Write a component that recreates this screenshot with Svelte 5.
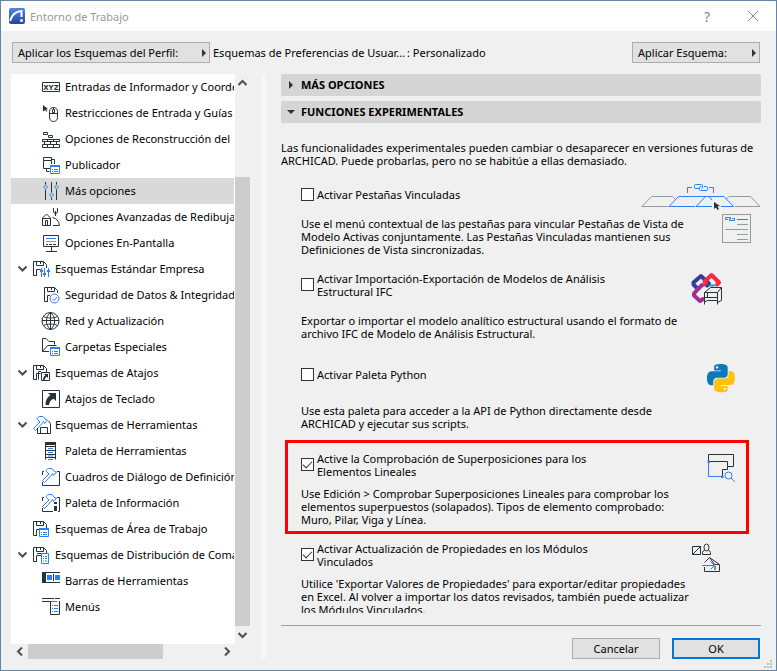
<script lang="ts">
	type Shape = { d: string; c: string };
	type Row = { label: string; icon: string; level: number; open?: boolean };

	// c: k = dark line, b = blue line, kf / bf = filled, w = white fill with blue line
	const floppy = 'M5 16.5H1.5V2.5H11.5L14.5 5.5V9M4.5 2.5V6.5H11.5V2.5M8.5 3V5M4.5 16.5V10.5H8.5';
	const ventana: Shape[] = [
		{ d: 'M9.5 10.5H18.5V18.5H9.5Z', c: 'w' },
		{ d: 'M9 10H19V12H9Z', c: 'bf' },
		{ d: 'M11 14.5H12M13 14.5H17M11 16.5H12M13 16.5H17', c: 'b' }
	];
	const martillo: Shape = {
		d: 'M1.5 13.5L8 7L5.5 4.5C4.5 3.5 6 2 7.5 1.5H11L13.5 4.5L15.5 5L12.5 8.5L11.5 6.5L10 8.5L3.5 15.5Z',
		c: 'b'
	};

	const iconos: Record<string, Shape[]> = {
		xyz: [{ d: 'M1.5 5.5H18.5V14.5H1.5Z', c: 'k' }],
		raton: [
			{ d: 'M2 2L7 6L5 6.5L6.5 8L5.5 8.7L4.3 7L2 8.5Z', c: 'kf' },
			{ d: 'M8.5 10V8.5C8.5 5.5 10.5 4.5 12.5 4.5S16.5 5.5 16.5 8.5V14C16.5 17 15 18.5 12.5 18.5S8.5 17 8.5 14ZM8.5 10.5H16.5M12.5 4.5V6M12.5 10V11M11.5 6.5H13.5V9.5H11.5Z', c: 'k' }
		],
		muro: [
			{ d: 'M2.5 3.5H6.5V5.5H2.5ZM7.5 6.5H11.5V8.5H7.5Z', c: 'k' },
			{ d: 'M1.5 10.5H18.5M1.5 12.5H18.5M1.5 15.5H18.5M1.5 18.5H18.5M1.5 10.5V12.5M6.5 10.5V12.5M12.5 10.5V12.5M18.5 10.5V12.5M3.5 12.5V15.5M9.5 12.5V15.5M15.5 12.5V15.5M1.5 15.5V18.5M6.5 15.5V18.5M12.5 15.5V18.5M18.5 15.5V18.5', c: 'k' }
		],
		publicador: [
			{ d: 'M2.5 2.5H10.5V5.5H2.5ZM2.5 5.5V13.5H9M10.5 4.5H13.5V9M5.5 14V16.5H8.5M10.5 5.5V9', c: 'k' },
			...ventana
		],
		ajustes: [
			{ d: 'M4.5 1V3.5M4.5 8.5V19M10.5 1V11.5M10.5 16.5V19M15.5 1V3.5M15.5 8.5V19', c: 'k' },
			{ d: 'M4.5 4L6.5 6L4.5 8L2.5 6ZM10.5 12L12.5 14L10.5 16L8.5 14ZM15.5 4L17.5 6L15.5 8L13.5 6Z', c: 'b' }
		],
		redibujar: [
			{ d: 'M1.5 18.5V11L5.5 7L9.5 11V18.5ZM1.5 11.5H9.5M4.5 18.5V13.5H6.5V18.5', c: 'k' },
			{ d: 'M12.5 1V5L14.5 7.5L16.5 5V1M14.5 4V9M11.5 10.5C15.5 11.5 18 14 18.5 18.5H12', c: 'k' }
		],
		pantalla: [
			{ d: 'M2.5 2.5H17.5V13.5H2.5ZM10.5 13.5V18M5 18.5H16M5 11.5H7M8 11.5H11M12 11.5H15', c: 'k' },
			{ d: 'M5 5.5H15', c: 'b' },
			{ d: 'M5 8.5H15', c: 'g' }
		],
		empresa: [
			{ d: floppy, c: 'k' },
			{ d: 'M9.5 9V18M12.5 9V18M16.5 9V18', c: 'b' },
			{ d: 'M8 11H11V13H8ZM11 14H14V16H11ZM15 11H18V13H15Z', c: 'bf' }
		],
		seguridad: [
			{ d: 'M7 16.5H3.5V2.5H13.5L16.5 5.5V8M6.5 2.5V6.5H13.5V2.5M10.5 3V5M6.5 16.5V10.5H9', c: 'k' },
			{ d: 'M18 13.5A4.5 4.5 0 1 1 9 13.5A4.5 4.5 0 1 1 18 13.5ZM11 13.5L13 15.5L16 12', c: 'b' }
		],
		red: [
			{ d: 'M18 10A8.5 8.5 0 1 1 1 10A8.5 8.5 0 1 1 18 10ZM1 9.5H18M9.5 1.5V18.5M2.5 5.5C6 7.5 13 7.5 16.5 5.5M2.5 14.5C6 12.5 13 12.5 16.5 14.5M9.5 1.5C4 6 4 14 9.5 18.5C15 14 15 6 9.5 1.5', c: 'k' }
		],
		carpeta: [
			{ d: 'M8 14.5H1.5V1.5H5L8 4.5H13.5V7.5M1.5 14.5L6.5 8.5H15.5', c: 'k' },
			...ventana
		],
		atajos: [
			{ d: floppy, c: 'k' },
			{ d: 'M6.5 16.5V8.5H9', c: 'k' },
			{ d: 'M9.5 9.5H17.5V17.5H9.5Z', c: 'k' },
			{ d: 'M12 11H16V15L14.8 13.8C13.5 14.5 13 15.5 12.5 17H11C11 15 11.7 13.8 13.3 12.3Z', c: 'kf' }
		],
		teclado: [
			{ d: 'M1.5 1.5H18.5V18.5H1.5Z', c: 'k' },
			{ d: 'M7 4H15V12L12.6 9.8C9.5 11 8.5 13 8 16H4.5C4.5 11.5 6 8.5 9.3 6.3Z', c: 'kf' }
		],
		herramientas: [
			martillo,
			{ d: 'M5.5 13V18.5H18.5V8.5L16.5 6M8.5 18.5V12.5H15.5V18.5', c: 'k' }
		],
		paleta: [
			{ d: 'M4.5 18.5V1.5H14.5V18.5M4.5 5.5H14.5M4.5 9.5H14.5M4.5 13.5H14.5M4.5 16.5H14.5', c: 'k' },
			{ d: 'M4 1H15V4H4Z', c: 'kf' },
			{ d: 'M7 7.5H12M7 11.5H12M7 15H12M7 18.5H12', c: 'b' }
		],
		cuadros: [martillo, { d: 'M1.5 8V4.5H3M1.5 15V18.5H18.5V4.5H16', c: 'k' }],
		informacion: [
			martillo,
			{ d: 'M1.5 8V4.5H3M1.5 15V18.5H12M16 4.5H18.5V18.5H17', c: 'k' },
			{ d: 'M13 9H16V11H13ZM13 13H16V18H13Z', c: 'kf' }
		],
		area: [
			{ d: floppy, c: 'k' },
			{ d: 'M7.5 9.5H16.5V17.5H7.5Z', c: 'w' },
			{ d: 'M7 9H17V11H7Z', c: 'bf' },
			{ d: 'M9 13.5H10M11 13.5H15M9 15.5H10M11 15.5H15', c: 'b' }
		],
		distribucion: [
			{ d: floppy, c: 'k' },
			{ d: 'M5 8.5H15M6 10.5H9', c: 'k' },
			{ d: 'M9.5 8.5H16.5V18.5H9.5ZM11 11.5H12M13 11.5H15M11 13.5H12M13 13.5H15M11 16H12M13 16H15', c: 'w' }
		],
		barras: [
			{ d: 'M1 1H5V12H1Z', c: 'kf' },
			{ d: 'M5 1.5H19M5 11.5H19M12.5 3V10', c: 'k' },
			{ d: 'M6 4H11V9H6ZM14 4H19V9H14Z', c: 'bf' }
		],
		menus: [
			{ d: 'M1 1.5H13M14 1.5H19M1 4.5H9M9.5 4V17.5H18.5V4', c: 'k' },
			{ d: 'M10 4.5H16M11 8.5H12M13 8.5H17M11 11.5H12M13 11.5H17M11 14.5H12M13 14.5H17', c: 'b' }
		]
	};

	const arbol: Row[] = [
		{ label: 'Entradas de Informador y Coordenadas', icon: 'xyz', level: 2 },
		{ label: 'Restricciones de Entrada y Guías', icon: 'raton', level: 2 },
		{ label: 'Opciones de Reconstrucción del', icon: 'muro', level: 2 },
		{ label: 'Publicador', icon: 'publicador', level: 2 },
		{ label: 'Más opciones', icon: 'ajustes', level: 2 },
		{ label: 'Opciones Avanzadas de Redibujado', icon: 'redibujar', level: 2 },
		{ label: 'Opciones En-Pantalla', icon: 'pantalla', level: 2 },
		{ label: 'Esquemas Estándar Empresa', icon: 'empresa', level: 1, open: true },
		{ label: 'Seguridad de Datos & Integridad', icon: 'seguridad', level: 2 },
		{ label: 'Red y Actualización', icon: 'red', level: 2 },
		{ label: 'Carpetas Especiales', icon: 'carpeta', level: 2 },
		{ label: 'Esquemas de Atajos', icon: 'atajos', level: 1, open: true },
		{ label: 'Atajos de Teclado', icon: 'teclado', level: 2 },
		{ label: 'Esquemas de Herramientas', icon: 'herramientas', level: 1, open: true },
		{ label: 'Paleta de Herramientas', icon: 'paleta', level: 2 },
		{ label: 'Cuadros de Diálogo de Definición', icon: 'cuadros', level: 2 },
		{ label: 'Paleta de Información', icon: 'informacion', level: 2 },
		{ label: 'Esquemas de Área de Trabajo', icon: 'area', level: 1 },
		{ label: 'Esquemas de Distribución de Comandos', icon: 'distribucion', level: 1, open: true },
		{ label: 'Barras de Herramientas', icon: 'barras', level: 2 },
		{ label: 'Menús', icon: 'menus', level: 2 }
	];

	let seleccion = $state('ajustes');

	let funciones = $state([
		{
			id: 'pestanas',
			activa: false,
			titulo: 'Activar Pestañas Vinculadas',
			texto: 'Use el menú contextual de las pestañas para vincular Pestañas de Vista de\nModelo Activas conjuntamente. Las Pestañas Vinculadas mantienen sus\nDefiniciones de Vista sincronizadas.'
		},
		{
			id: 'ifc',
			activa: false,
			titulo: 'Activar Importación-Exportación de Modelos de Análisis\nEstructural IFC',
			texto: 'Exportar o importar el modelo analítico estructural usando el formato de\narchivo IFC de Modelo de Análisis Estructural.'
		},
		{
			id: 'python',
			activa: false,
			titulo: 'Activar Paleta Python',
			texto: 'Use esta paleta para acceder a la API de Python directamente desde\nARCHICAD y ejecutar sus scripts.'
		},
		{
			id: 'superposicion',
			activa: true,
			titulo: 'Active la Comprobación de Superposiciones para los\nElementos Lineales',
			texto: 'Use Edición > Comprobar Superposiciones Lineales para comprobar los\nelementos superpuestos (solapados). Tipos de elemento comprobado:\nMuro, Pilar, Viga y Línea.'
		},
		{
			id: 'modulos',
			activa: true,
			titulo: 'Activar Actualización de Propiedades en los Módulos\nVinculados',
			texto: "Utilice 'Exportar Valores de Propiedades' para exportar/editar propiedades\nen Excel. Al volver a importar los datos revisados, también puede actualizar\nlos Módulos Vinculados."
		}
	]);

	const serpiente =
		'M14.25.18l.9.2.73.26.59.3.45.32.34.34.25.34.16.33.1.3.04.26.02.2-.01.13V8.5l-.05.63-.13.55-.21.46-.26.38-.3.31-.33.25-.35.19-.35.14-.33.1-.3.07-.26.04-.21.02H8.77l-.69.05-.59.14-.5.22-.41.27-.33.32-.27.35-.2.36-.15.37-.1.35-.07.32-.04.27-.02.21v3.06H3.17l-.21-.03-.28-.07-.32-.12-.35-.18-.36-.26-.36-.36-.35-.46-.32-.59-.28-.73-.21-.88-.14-1.05-.05-1.23.06-1.22.16-1.04.24-.87.32-.71.36-.57.4-.44.42-.33.42-.24.4-.16.36-.1.32-.05.24-.01h.16l.06.01h8.16v-.83H6.18l-.01-2.75-.02-.37.05-.34.11-.31.17-.28.25-.26.31-.23.38-.2.44-.18.51-.15.58-.12.64-.1.71-.06.77-.04.84-.02 1.27.05zm-6.3 1.98l-.23.33-.08.41.08.41.23.34.33.22.41.09.41-.09.33-.22.23-.34.08-.41-.08-.41-.23-.33-.33-.22-.41-.09-.41.09z';
</script>

<div class="dialogo">
	<header class="titulo">
		<svg class="logo" width="16" height="16" viewBox="0 0 16 16">
			<defs>
				<linearGradient id="azul" x1="0" y1="0" x2="0" y2="1">
					<stop offset="0" stop-color="#4f86e0" />
					<stop offset="1" stop-color="#2347a0" />
				</linearGradient>
			</defs>
			<rect width="16" height="16" rx="2" fill="url(#azul)" />
			<path d="M1 13C2.5 7.5 6 3.5 12.5 3V9" fill="none" stroke="#fff" stroke-width="2" />
			<circle cx="12.5" cy="12.5" r="1.5" fill="#fff" />
		</svg>
		<h1>Entorno de Trabajo</h1>
		<button class="ventana-btn" aria-label="Ayuda">?</button>
		<button class="ventana-btn" aria-label="Cerrar">
			<svg width="12" height="12" viewBox="0 0 12 12"><path d="M1 1L11 11M11 1L1 11" fill="none" stroke="#888" /></svg>
		</button>
	</header>

	<div class="perfil">
		<button class="desplegable ancho">Aplicar los Esquemas del Perfil:<span class="flecha"></span></button>
		<span class="perfil-texto">Esquemas de Preferencias de Usuar...&thinsp;: Personalizado</span>
		<button class="desplegable">Aplicar Esquema:<span class="flecha"></span></button>
	</div>

	<div class="cuerpo">
		<nav class="lateral">
			<div class="lateral-fila">
				<ul class="arbol">
					{#each arbol as fila}
						<li>
							<button class="nodo nivel-{fila.level}" class:activo={seleccion === fila.icon} onclick={() => (seleccion = fila.icon)}>
								{#if fila.level === 1}
									<svg class="chevron" width="9" height="8" viewBox="0 0 9 8">
										{#if fila.open}<path d="M.5 1.5L4.5 5.5L8.5 1.5" />{/if}
									</svg>
								{/if}
								<svg class="icono" width="20" height="20" viewBox="0 0 20 20">
									{#each iconos[fila.icon] as forma}
										<path d={forma.d} class={forma.c} />
									{/each}
									{#if fila.icon === 'xyz'}
										<text x="10" y="12.5">XYZ</text>
									{/if}
								</svg>
								<span>{fila.label}</span>
							</button>
						</li>
					{/each}
				</ul>
				<div class="barra-v">
					<button aria-label="Subir"><svg width="9" height="8" viewBox="0 0 9 8"><path d="M.5 6L4.5 2L8.5 6" /></svg></button>
					<div class="pista-v"><div class="pulgar-v"></div></div>
					<button aria-label="Bajar"><svg width="9" height="8" viewBox="0 0 9 8"><path d="M.5 2L4.5 6L8.5 2" /></svg></button>
				</div>
			</div>
			<div class="barra-h">
				<button aria-label="Izquierda"><svg width="8" height="9" viewBox="0 0 8 9"><path d="M6 .5L2 4.5L6 8.5" /></svg></button>
				<div class="pista-h"><div class="pulgar-h"></div></div>
				<button aria-label="Derecha"><svg width="8" height="9" viewBox="0 0 8 9"><path d="M2 .5L6 4.5L2 8.5" /></svg></button>
			</div>
		</nav>

		<div class="divisor"></div>

		<main class="panel">
			<button class="seccion"><span class="flecha"></span>MÁS OPCIONES</button>
			<button class="seccion"><span class="flecha abajo"></span>FUNCIONES EXPERIMENTALES</button>

			<div class="contenido">
				<p class="intro">Las funcionalidades experimentales pueden cambiar o desaparecer en versiones futuras de{'\n'}ARCHICAD. Puede probarlas, pero no se habitúe a ellas demasiado.</p>

				{#each funciones as f}
					<section class="funcion" class:resaltada={f.id === 'superposicion'}>
						<label class="opcion">
							<input type="checkbox" bind:checked={f.activa} />
							<span>{f.titulo}</span>
						</label>
						<p class="descripcion">{f.texto}</p>
						<svg class="dibujo" width="120" height="75" viewBox="0 0 120 75">
							{#if f.id === 'pestanas'}
								<path class="g" d="M27 24.5H1L10.5 14.5H31.5L34 17M85.5 17L88 14.5H109.5L119 24.5H94" />
								<path class="b" d="M54 24.5H28L37.5 14.5H68L71 18M71 24.5H55L64.5 14.5H83L92.5 24.5H80" />
								<path class="b" d="M46.5 11V5.5H51M68 5.5H72.5V11" />
								<path class="b" d="M58 6.5H54.5Q53.5 6.5 53.5 5.500V3.500Q53.5 2.500 54.500 2.500H60.500Q61.500 2.500 61.500 3.500V5.500Q61.500 6.500 60.500 6.500M60.500 4.500H59.500Q58.500 4.500 58.500 5.500V7.500Q58.500 8.500 59.500 8.500H65.500Q66.500 8.500 66.500 7.500V5.500Q66.500 4.500 65.500 4.500H63" />
								<path class="kf" d="M73 20V27L75 25.5L76.5 28L78 27L76.5 24.500L79 24Z" />
								<rect class="g" x="81.5" y="32.5" width="28" height="28" />
								<path class="g" d="M96 42.5H107M84 47.5H107M96 52.5H107M96 57.5H107" />
								<path class="b" d="M96 37.5H107M87 37.5H84.5V35.5H89.5V37.5M91 36.5H93.5V38.5H88.5V36.5" />
							{:else if f.id === 'ifc'}
								<g fill="none" stroke-width="4" stroke-linejoin="round" stroke-linecap="round">
									<path stroke="#a02f93" d="M57 17L53 21.5V23.5L59 29L62 27" />
									<path stroke="#2f3f9e" d="M55 15L52.5 12.5V10.5L60 4L68 11.5L66 13.5" />
									<path stroke="#fb2841" d="M63.5 9.5L70.5 3L78 10.5L76 12.5" />
									<path stroke="#a02f93" d="M57 17L61 13" />
									<path stroke="#fb2841" stroke-width="3" d="M65.5 10.5L63 13" />
									<path stroke="#10a3a0" stroke-width="2" d="M69 13.5H73" />
								</g>
								<path fill="#f0f0f0" d="M63 19L69 15H81V29L77 31H63Z" />
								<path class="k" d="M63.5 32.5V20.5L69.5 15.5H80.5V28.5M76.5 32.5V20.5H63.5M76.5 20.5L80.5 15.5M76.5 30.5L80.5 28.5M63.5 25.5H76.5M66.5 25V21M66.5 28.5H76.5M66.5 28.5L63.5 30" />
							{:else if f.id === 'python'}
								<g transform="translate(66 2) scale(1.16 1.18)">
									<path d={serpiente} fill="#0d78ba" />
									<path d={serpiente} fill="#ffc20e" transform="rotate(180 12 12)" />
								</g>
							{:else if f.id === 'superposicion'}
								<path class="k" d="M67.5 9.5V2.5H92.5V14.5H86.5V9.5H67.5M81.5 24V17.5H86.5V14.5" />
								<path class="b" d="M67.5 10V24.5H81" />
								<path class="bf" d="M66.5 8.5H69V11H66.5ZM80 23.5H82.5V26H80Z" />
								<circle class="b" cx="87.5" cy="23.5" r="3.5" />
								<path class="b" d="M90 26L94 30" />
							{:else}
								<path class="k" d="M51.5 4.5H59.5V12.5H51.5ZM51.5 12.5L59.5 4.5" />
								<ellipse class="k" cx="65.5" cy="5.5" rx="2.5" ry="3.5" />
								<path class="k" d="M63.500 8.5Q61.5 9 61.5 10.5V12.5H69.5V10.5Q69.5 9 67.5 8.5" />
								<path class="k" d="M63.5 20.5L68.5 15.5L78.5 22.5V29.5H63.5V25M68.5 15.5L73.5 22.5H78M74 24V28" />
								<path class="b" d="M61 23.5H73M69.5 19.5L73.5 23.5L69.5 27.5" />
							{/if}
						</svg>
					</section>
				{/each}
			</div>

			<footer class="pie">
				<button class="accion">Cancelar</button>
				<button class="accion principal">OK</button>
			</footer>
		</main>
	</div>

	<svg class="tirador" width="9" height="9" viewBox="0 0 9 9">
		<path d="M6 0H8V2H6ZM3 3H5V5H3ZM6 3H8V5H6ZM0 6H2V8H0ZM3 6H5V8H3ZM6 6H8V8H6Z" fill="#bdbdbd" />
	</svg>
</div>

<style>
	:global(body) { margin: 0; }
	.dialogo {
		position: relative; box-sizing: border-box; height: 100vh;
		display: flex; flex-direction: column; overflow: hidden;
		border: 1px solid #6485a3; background: #f0f0f0; color: #000;
		font: 11px/13px "Noto Sans", "Open Sans", sans-serif;
	}
	button { font: inherit; color: inherit; margin: 0; padding: 0; border: 0; background: none; box-sizing: border-box; }
	p, h1, ul { margin: 0; padding: 0; }

	.titulo { display: flex; align-items: center; height: 30px; padding-left: 8px; background: #fff; flex: none; }
	.titulo h1 { flex: 1; margin-left: 5px; font-size: 11px; font-weight: 400; color: #999; }
	.ventana-btn { width: 46px; height: 30px; font-size: 14px; color: #888; display: flex; align-items: center; justify-content: center; }

	.perfil { display: flex; align-items: center; height: 21px; padding: 11px 16px 11px 11px; flex: none; }
	.perfil-texto { flex: 1; margin-left: 3px; white-space: pre; }
	.desplegable {
		display: flex; align-items: center; justify-content: space-between;
		width: 128px; height: 21px; padding: 0 3px 0 5px; white-space: nowrap;
		border: 1px solid #adadad; background: #e1e1e1;
	}
	.ancho { width: 198px; }
	.flecha { width: 0; height: 0; border: 4px solid transparent; border-left: 4px solid #333; border-right: 0; }
	.flecha.abajo { border: 4px solid transparent; border-top: 4px solid #333; border-bottom: 0; }

	.cuerpo { flex: 1; min-height: 0; display: flex; padding: 0 15px 11px 10px; }
	.lateral { flex: 0 0 239px; min-width: 0; display: flex; flex-direction: column; }
	.lateral-fila { flex: 1; min-height: 0; display: flex; }
	.arbol { flex: 1; min-width: 0; overflow: hidden; background: #fff; list-style: none; border-right: 1px solid #fff; }
	.nodo { display: flex; align-items: center; width: 100%; height: 26px; white-space: nowrap; overflow: hidden; text-align: left; }
	.nodo span { margin-left: 4px; padding-bottom: 2px; }
	.nivel-1 { padding-left: 7px; }
	.nivel-1 span { margin-left: 3px; }
	.nivel-2 { padding-left: 30px; }
	.activo { background: #d9d9d9; }
	.icono { flex: none; }
	.icono text { font: 700 7px "DejaVu Sans", sans-serif; fill: #27333a; text-anchor: middle; }
	.chevron { flex: none; margin-right: 5px; }
	.chevron path, .barra-v path, .barra-h path { fill: none; stroke: #505050; stroke-width: 2; }

	.k, .b, .g, .w { fill: none; stroke-width: 1; }
	.k { stroke: #27333a; }
	.b, .w { stroke: #2d7ff9; }
	.g { stroke: #949a9e; }
	.w { fill: #fff; }
	.kf { fill: #27333a; }
	.bf { fill: #2d7ff9; }

	.barra-v { width: 15px; display: flex; flex-direction: column; }
	.barra-v button, .barra-h button { display: flex; align-items: center; justify-content: center; flex: none; width: 17px; height: 15px; }
	.barra-v button { width: 15px; height: 18px; }
	.pista-v { flex: 1; display: flex; align-items: flex-end; }
	.pulgar-v { width: 15px; height: 84%; background: #cdcdcd; }
	.barra-h { display: flex; height: 15px; padding-right: 15px; }
	.pista-h { flex: 1; display: flex; }
	.pulgar-h { width: 71%; background: #cdcdcd; }
	.divisor { flex: none; width: 5px; margin: 0 15px 0 11px; background: #f6f6f6; }

	.panel { flex: 1; min-width: 0; display: flex; flex-direction: column; }
	.seccion {
		display: flex; align-items: center; gap: 6px; flex: none;
		height: 22px; margin-bottom: 5px; padding: 0 0 1px 6px;
		border-radius: 2px; background: #d5d5d5; font-weight: 700;
	}
	.seccion .flecha { margin: 0 2px; }
	.seccion .flecha.abajo { margin: 0; }
	.contenido { flex: 1; min-height: 0; overflow: hidden; padding-top: 13px; }
	.intro, .opcion, .descripcion { white-space: pre; }
	.intro { margin-bottom: 15px; }
	.funcion {
		position: relative; display: grid; grid-template: 26px 39px / minmax(0, 1fr) 120px;
		row-gap: 9px; margin: 0 0 16px 20px;
	}
	.resaltada::before { content: ""; position: absolute; inset: -12px 12px -8px -16px; border: 3px solid #f00; }
	.opcion, .descripcion { grid-column: 1; display: flex; align-items: center; }
	.opcion { gap: 3px; padding-bottom: 1px; }
	.opcion input {
		appearance: none; position: relative; flex: none;
		width: 13px; height: 13px; margin: 0; border: 1px solid #333; background: #fff;
	}
	.opcion input:checked::after {
		content: ""; position: absolute; left: 1px; top: 2px; width: 8px; height: 4px;
		border: solid #333; border-width: 0 0 1px 1px; transform: rotate(-45deg);
	}
	.dibujo { grid-column: 2; grid-row: 1 / 3; }

	.pie { display: flex; justify-content: flex-end; gap: 12px; flex: none; margin-top: 12px; padding: 12px 1px 0 0; border-top: 1px solid #a0a0a0; }
	.accion { width: 88px; height: 21px; border: 1px solid #adadad; background: #e1e1e1; }
	.principal { border: 2px solid #0078d7; }
	.tirador { position: absolute; right: 3px; bottom: 1px; }
</style>
